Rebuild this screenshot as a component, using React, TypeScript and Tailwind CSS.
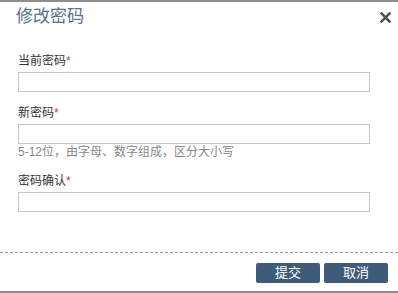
import React from 'react';

const fields = [
  { label: '当前密码', hint: '' },
  { label: '新密码', hint: '5-12位，由字母、数字组成，区分大小写' },
  { label: '密码确认', hint: '' },
];

export default function App() {
  return (
    <div className="w-[398px] h-[293px] bg-white border-t-2 border-b-2 border-[#8c8c8c] flex flex-col font-['Liberation_Sans','Noto_Sans_CJK_SC',sans-serif]">
      {/* Header */}
      <div className="h-[30px] flex items-center justify-between pl-[16px] pr-[7px]">
        <h1 className="text-[17px] leading-[24px] text-[#56708c]">修改密码</h1>
        <button className="w-[11px] h-[11px] flex items-center justify-center">
          <svg width="11" height="11" viewBox="0 0 11 11">
            <path d="M1.5 1.5 L9.5 9.5 M9.5 1.5 L1.5 9.5" stroke="#555" strokeWidth="2.6" strokeLinecap="square" />
          </svg>
        </button>
      </div>

      {/* Form */}
      <div className="pt-[20px] pb-[40px] pl-[18px] pr-[28px] flex flex-col gap-[12px]">
        {fields.map((f) => (
          <div key={f.label} className="flex flex-col">
            <label className="text-[12px] leading-[18px] text-[#333] mb-[2px]">
              {f.label}
              <span className="text-[#e0322f]">*</span>
            </label>
            <input
              type="password"
              className="h-[20px] w-[352px] border border-[#c8c8c8] bg-white outline-none"
            />
            {f.hint && (
              <p className="text-[12px] leading-[16px] text-[#888]">{f.hint}</p>
            )}
          </div>
        ))}
      </div>

      {/* Divider */}
      <div className="border-t border-dashed border-[#9a9a9a]" />

      {/* Footer */}
      <div className="flex justify-end gap-[4px] pt-[10px] pr-[10px]">
        <button className="w-[64px] h-[20px] rounded-[2px] bg-[#3e5b79] text-white text-[13px] leading-[20px]">
          提交
        </button>
        <button className="w-[64px] h-[20px] rounded-[2px] bg-[#3e5b79] text-white text-[13px] leading-[20px]">
          取消
        </button>
      </div>
    </div>
  );
}
